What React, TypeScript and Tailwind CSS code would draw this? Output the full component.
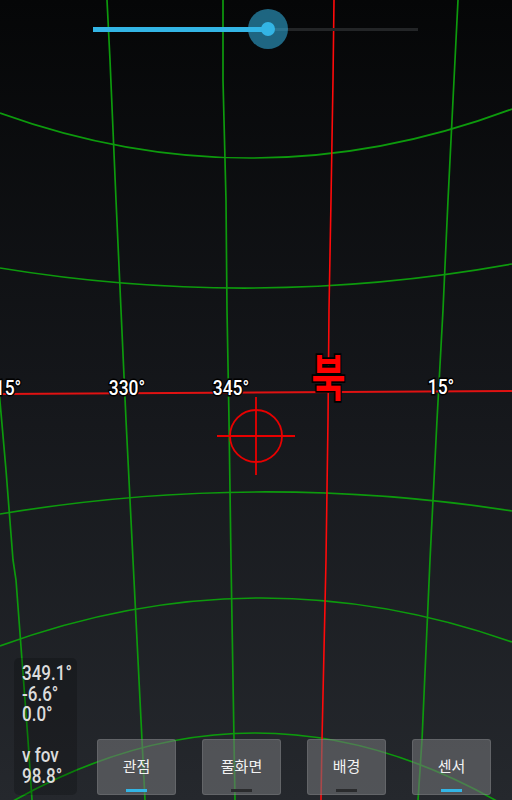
import React from "react";

const G = "#0d9a0d";

function pts(p: number[][]) {
  return p.map((q) => q.join(",")).join(" ");
}

const meridians = [
  [[-1, 390], [6, 470], [13, 560], [16, 580], [22, 660], [28, 740], [32, 800]],
  [[107, 0], [110, 60], [116, 200], [121, 310], [126, 420], [133, 560], [142, 740], [145, 800]],
  [[223, 0], [223, 80], [226, 200], [227, 310], [229, 420], [231, 560], [234, 740], [235, 800]],
  [[458, 0], [454, 80], [448, 200], [443, 310], [437, 420], [430, 560], [422, 740], [418, 800]],
];

const redMeridian = [[334, 0], [333, 80], [331, 200], [329, 310], [328, 420], [326, 560], [322, 740], [321, 800]];

const labels: [number, number, string][] = [
  [8, 395, "15°"],
  [127, 395, "330°"],
  [231, 395, "345°"],
  [441, 394, "15°"],
];

function Sky() {
  const labelStyle: React.CSSProperties = {
    fontFamily: "Roboto, 'Noto Sans', sans-serif",
    fontSize: 21,
    fontWeight: 500,
    paintOrder: "stroke",
  };
  return (
    <svg className="absolute inset-0" width="512" height="800" viewBox="0 0 512 800">
      <g fill="none" stroke={G} strokeWidth="1.7">
        <path d="M0 113 Q256 205 512 109" />
        <path d="M0 268 Q256 310 512 264" />
        <path d="M0 514 Q256 471.5 512 511" />
        <path d="M0 646 Q256 552 512 642" />
        <path d="M0 808.6 Q256 656.8 512 809.8" />
        {meridians.map((m, i) => (
          <polyline key={i} points={pts(m)} />
        ))}
      </g>
      <polyline points={pts(redMeridian)} fill="none" stroke="#ff0a0a" strokeWidth="1.6" />
      <path d="M0 394 L512 391" stroke="#e01212" strokeWidth="2" />
      <g fill="white" stroke="black" strokeWidth="3" textAnchor="middle" style={labelStyle}>
        {labels.map(([x, y, t]) => (
          <text key={t + x} transform={`translate(${x} ${y}) scale(0.83 1)`}>
            {t}
          </text>
        ))}
      </g>
      <text
        transform="translate(328.5 396) scale(0.74 1)"
        textAnchor="middle"
        fill="#ff0000"
        stroke="black"
        strokeWidth="3.5"
        style={{
          fontFamily: "'Noto Sans CJK KR', sans-serif",
          fontSize: 50,
          fontWeight: 700,
          paintOrder: "stroke",
        }}
      >
        북
      </text>
      <g stroke="#e80000" strokeWidth="1.8" fill="none">
        <circle cx="256" cy="436" r="26" />
        <path d="M217 436 H295 M256 397 V475" />
      </g>
    </svg>
  );
}

function Btn({ label, active }: { label: string; active: boolean }) {
  return (
    <div className="flex h-[56px] w-[79px] flex-col items-center rounded-[3px] border border-white/10 bg-[rgba(112,114,117,0.6)]">
      <div className="flex flex-1 items-center pt-[4px] text-[15px] text-[#f2f2f2]" style={{ fontFamily: "'Noto Sans CJK KR', sans-serif" }}>
        {label}
      </div>
      <div className={`mb-[2px] h-[3px] w-[21px] ${active ? "bg-[#33b5e5]" : "bg-[#2a2b2d]"}`} />
    </div>
  );
}

export default function App() {
  return (
    <div className="relative h-[800px] w-[512px] overflow-hidden bg-[linear-gradient(to_bottom,#050607,#15171b_50%,#25282d)]">
      <Sky />
      <div className="absolute inset-0 flex flex-col justify-between">
        <div className="relative ml-[93px] mt-[27px] flex h-[5px] w-[325px] items-center">
          <div className="h-[5px] w-[175px] bg-[#33b5e5]" />
          <div className="h-[3px] flex-1 bg-[#232527]" />
          <div className="absolute left-[155px] top-[-18px] flex h-[40px] w-[40px] items-center justify-center rounded-full bg-[rgba(51,181,229,0.55)]">
            <div className="h-[14px] w-[14px] rounded-full bg-[#33b5e5]" />
          </div>
        </div>
        <div className="flex items-end pb-[5px] pl-[14px]">
          <div className="flex h-[137px] w-[63px] flex-col rounded-[5px] bg-black/20 pl-[8px] pt-[5px]">
            <div
              className="flex origin-left scale-x-[0.83] flex-col whitespace-nowrap text-[20.5px] font-medium leading-[20.5px] text-[#dcdcdc]"
              style={{ fontFamily: "Roboto, 'Noto Sans', sans-serif" }}
            >
              <div>349.1°</div>
              <div>-6.6°</div>
              <div>0.0°</div>
              <div>&nbsp;</div>
              <div>v fov</div>
              <div>98.8°</div>
            </div>
          </div>
          <div className="ml-[20px] flex gap-[26px]">
            <Btn label="관점" active />
            <Btn label="풀화면" active={false} />
            <Btn label="배경" active={false} />
            <Btn label="센서" active />
          </div>
        </div>
      </div>
    </div>
  );
}
